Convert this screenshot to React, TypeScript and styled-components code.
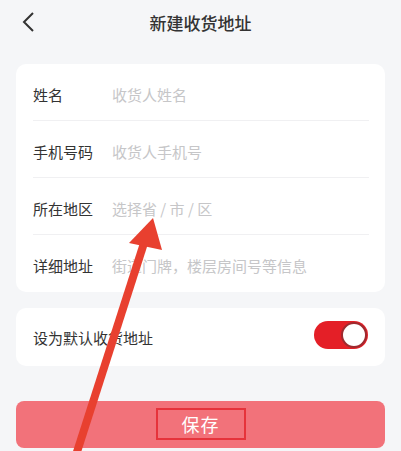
import React, { useState } from "react";
import styled, { createGlobalStyle } from "styled-components";

const GlobalStyle = createGlobalStyle`
  html, body {
    margin: 0;
    padding: 0;
    background: #f5f6f8;
    font-family: "Noto Sans CJK SC", "Noto Sans", sans-serif;
  }
`;

const Page = styled.div`
  position: relative;
  width: 401px;
  height: 451px;
  overflow: hidden;
  background: #f5f6f8;
`;

const Header = styled.div`
  position: relative;
  height: 44px;
  display: flex;
  align-items: center;
  justify-content: center;
`;

const BackButton = styled.button`
  position: absolute;
  left: 14px;
  top: 8px;
  width: 28px;
  height: 28px;
  padding: 0;
  border: none;
  background: none;
  display: flex;
  align-items: center;
  justify-content: center;
`;

const Title = styled.h1`
  margin: 0;
  font-size: 17px;
  font-weight: 500;
  color: #333;
`;

const Card = styled.div<{ $gap?: number }>`
  margin: ${(p) => p.$gap ?? 0}px 16px 0;
  background: #fff;
  border-radius: 10px;
`;

const Row = styled.div<{ $last?: boolean }>`
  height: 57px;
  box-sizing: border-box;
  padding-top: 4px;
  margin: 0 16px 0 17px;
  display: flex;
  align-items: center;
  border-bottom: ${(p) => (p.$last ? "none" : "1px solid #f0f0f2")};
`;

const Label = styled.span`
  width: 79px;
  flex-shrink: 0;
  font-size: 15px;
  color: #333;
`;

const Placeholder = styled.span`
  font-size: 15px;
  color: #c6c6c8;
`;

const SwitchRow = styled.div`
  height: 58px;
  padding: 0 17px;
  display: flex;
  align-items: center;
  justify-content: space-between;
`;

const Toggle = styled.button<{ $on: boolean }>`
  position: relative;
  width: 54px;
  height: 28px;
  margin-top: -4px;
  padding: 0;
  border: none;
  border-radius: 14px;
  background: ${(p) => (p.$on ? "#e41f27" : "#ddd")};
`;

const Knob = styled.span<{ $on: boolean }>`
  position: absolute;
  box-sizing: border-box;
  top: 1px;
  left: ${(p) => (p.$on ? "27px" : "1px")};
  width: 26px;
  height: 26px;
  border-radius: 50%;
  background: #fff;
  border: 2px solid #9e2a2f;
`;

const SaveButton = styled.button`
  display: flex;
  align-items: center;
  justify-content: center;
  width: 369px;
  height: 47px;
  margin: 35px 16px 0;
  border: none;
  border-radius: 8px;
  background: #f2727a;
`;

const SaveText = styled.span`
  width: 86px;
  height: 28px;
  margin-top: -2px;
  display: flex;
  align-items: center;
  justify-content: center;
  border: 2px solid #e6333b;
  font-family: "Noto Sans CJK SC", "Noto Sans", sans-serif;
  font-size: 18px;
  color: #fff;
  letter-spacing: 1px;
`;

const Pointer = styled.svg`
  position: absolute;
  left: 0;
  top: 0;
  pointer-events: none;
`;

const fields = [
  { label: "姓名", hint: "收货人姓名" },
  { label: "手机号码", hint: "收货人手机号" },
  { label: "所在地区", hint: "选择省 / 市 / 区" },
  { label: "详细地址", hint: "街道门牌，楼层房间号等信息" },
];

export default function App() {
  const [isDefault, setIsDefault] = useState(true);

  return (
    <Page>
      <GlobalStyle />
      <Header>
        <BackButton>
          <svg width="16" height="22" viewBox="0 0 16 22">
            <path d="M13 2 L4 11 L13 20" fill="none" stroke="#333" strokeWidth="2" />
          </svg>
        </BackButton>
        <Title>新建收货地址</Title>
      </Header>

      <Card $gap={20}>
        {fields.map((f, i) => (
          <Row key={f.label} $last={i === fields.length - 1}>
            <Label>{f.label}</Label>
            <Placeholder>{f.hint}</Placeholder>
          </Row>
        ))}
      </Card>

      <Card $gap={16}>
        <SwitchRow>
          <Label style={{ width: "auto" }}>设为默认收货地址</Label>
          <Toggle $on={isDefault} onClick={() => setIsDefault(!isDefault)}>
            <Knob $on={isDefault} />
          </Toggle>
        </SwitchRow>
      </Card>

      <SaveButton>
        <SaveText>保存</SaveText>
      </SaveButton>

      {/* red annotation arrow */}
      <Pointer width="401" height="451" viewBox="0 0 401 451">
        <line x1="76" y1="455" x2="145" y2="240" stroke="#e8402f" strokeWidth="8" />
        <polygon points="153,218 129,243 162,250" fill="#e8402f" />
      </Pointer>
    </Page>
  );
}
